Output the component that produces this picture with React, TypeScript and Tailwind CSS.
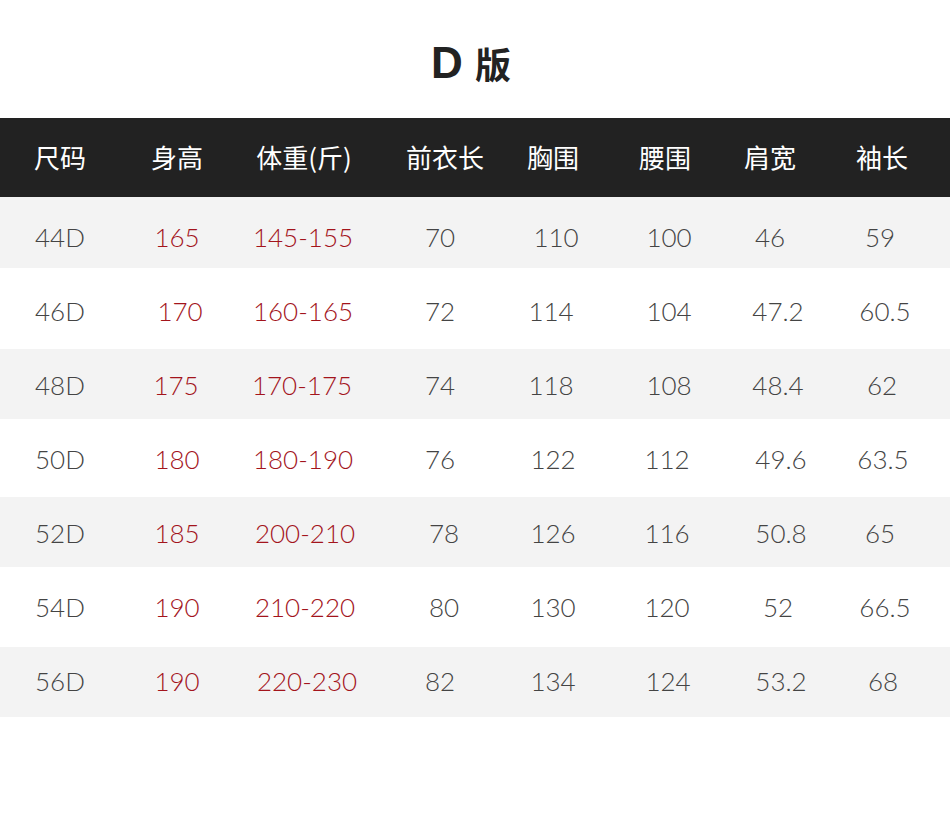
import React from "react";

type Cell = { t: string; c?: string };

const headers: Cell[] = [
  { t: "尺码", c: "" },
  { t: "身高", c: "" },
  { t: "体重(斤)", c: "" },
  { t: "前衣长", c: "translate-x-[3px]" },
  { t: "胸围", c: "" },
  { t: "腰围", c: "-translate-x-[2px]" },
  { t: "肩宽", c: "-translate-x-[6px]" },
  { t: "袖长", c: "" },
];

const rows: { cells: Cell[]; bg: string; h: string }[] = [
  {
    bg: "bg-[#f3f3f3]",
    h: "h-[71px] pt-[9px]",
    cells: [
      { t: "44D" }, { t: "165" }, { t: "145-155", c: "-translate-x-[1px]" }, { t: "70", c: "-translate-x-[2px]" },
      { t: "110", c: "translate-x-[3px]" }, { t: "100", c: "translate-x-[2px]" }, { t: "46", c: "-translate-x-[6px]" }, { t: "59", c: "-translate-x-[2px]" },
    ],
  },
  {
    bg: "bg-white",
    h: "h-[81px] pt-[5px]",
    cells: [
      { t: "46D" }, { t: "170", c: "translate-x-[3px]" }, { t: "160-165", c: "-translate-x-[1px]" }, { t: "72", c: "-translate-x-[2px]" },
      { t: "114", c: "-translate-x-[2px]" }, { t: "104", c: "translate-x-[2px]" }, { t: "47.2", c: "translate-x-[2px]" }, { t: "60.5", c: "translate-x-[3px]" },
    ],
  },
  {
    bg: "bg-[#f3f3f3]",
    h: "h-[70px] pt-[2px]",
    cells: [
      { t: "48D" }, { t: "175", c: "-translate-x-[1px]" }, { t: "170-175", c: "-translate-x-[2px]" }, { t: "74", c: "-translate-x-[2px]" },
      { t: "118", c: "-translate-x-[2px]" }, { t: "108", c: "translate-x-[2px]" }, { t: "48.4", c: "translate-x-[2px]" }, { t: "62" },
    ],
  },
  {
    bg: "bg-white",
    h: "h-[78px] pt-[2px]",
    cells: [
      { t: "50D" }, { t: "180" }, { t: "180-190", c: "-translate-x-[1px]" }, { t: "76", c: "-translate-x-[2px]" },
      { t: "122" }, { t: "112" }, { t: "49.6", c: "translate-x-[5px]" }, { t: "63.5", c: "translate-x-[1px]" },
    ],
  },
  {
    bg: "bg-[#f3f3f3]",
    h: "h-[70px] pt-[2px]",
    cells: [
      { t: "52D" }, { t: "185" }, { t: "200-210", c: "translate-x-[1px]" }, { t: "78", c: "translate-x-[2px]" },
      { t: "126" }, { t: "116" }, { t: "50.8", c: "translate-x-[5px]" }, { t: "65", c: "-translate-x-[2px]" },
    ],
  },
  {
    bg: "bg-white",
    h: "h-[80px]",
    cells: [
      { t: "54D" }, { t: "190" }, { t: "210-220", c: "translate-x-[1px]" }, { t: "80", c: "translate-x-[2px]" },
      { t: "130" }, { t: "120" }, { t: "52", c: "translate-x-[2px]" }, { t: "66.5", c: "translate-x-[3px]" },
    ],
  },
  {
    bg: "bg-[#f3f3f3]",
    h: "h-[70px] pb-[2px]",
    cells: [
      { t: "56D" }, { t: "190" }, { t: "220-230", c: "translate-x-[3px]" }, { t: "82", c: "-translate-x-[2px]" },
      { t: "134" }, { t: "124", c: "translate-x-[1px]" }, { t: "53.2", c: "translate-x-[5px]" }, { t: "68", c: "translate-x-[1px]" },
    ],
  },
];

const cols = "grid grid-cols-[120px_114px_140px_136px_86px_142px_76px_136px]";

export default function App() {
  return (
    <div className="w-[950px] h-[814px] bg-white overflow-hidden">
      <div className="h-[118px] flex items-center justify-center pt-[7px]">
        <div className="flex items-center gap-[12px] text-[#222222] -translate-x-[4px]">
          <span className="font-['Liberation_Sans',sans-serif] font-bold text-[44px] leading-none">D</span>
          <span className="font-['Noto_Sans_CJK_SC',sans-serif] font-bold text-[36px] leading-none">版</span>
        </div>
      </div>
      <div className={`${cols} h-[79px] bg-[#222222] items-center text-white font-['Noto_Sans_CJK_SC',sans-serif] text-[26px] pb-[2px]`}>
        {headers.map((h, i) => (
          <div key={i} className={`text-center whitespace-nowrap ${h.c ?? ""}`}>
            {h.t}
          </div>
        ))}
      </div>
      {rows.map((r, ri) => (
        <div
          key={ri}
          className={`${cols} ${r.bg} ${r.h} items-center font-['Lato',sans-serif] font-light text-[26px]`}
        >
          {r.cells.map((c, ci) => (
            <div
              key={ci}
              className={`text-center whitespace-nowrap leading-none ${
                ci === 1 || ci === 2 ? "text-[#a3141c]" : "text-[#444444]"
              } ${c.c ?? ""}`}
            >
              {c.t}
            </div>
          ))}
        </div>
      ))}
    </div>
  );
}
